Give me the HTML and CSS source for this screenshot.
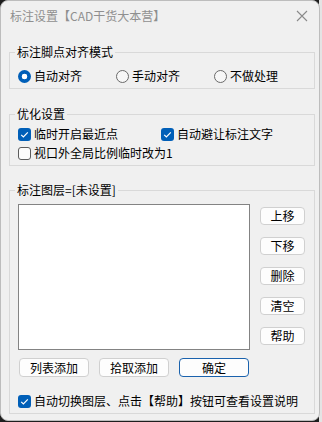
FILE: index.html
```html
<!DOCTYPE html>
<html lang="zh">
<head>
<meta charset="utf-8">
<title>标注设置</title>
<link rel="stylesheet" href="styles.css">
</head>
<body>
<div class="window">
  <div class="titlebar">
    <span class="title">标注设置【CAD干货大本营】</span>
    <svg class="close" width="12" height="12" viewBox="0 0 12 12"><path d="M1 1 L11 11 M11 1 L1 11" stroke="#8a8a8a" stroke-width="1.1" fill="none"/></svg>
  </div>
  <div class="content">
    <fieldset class="group g1">
      <legend>标注脚点对齐模式</legend>
      <div class="radios">
        <label class="opt"><span class="radio on"></span>自动对齐</label>
        <label class="opt"><span class="radio"></span>手动对齐</label>
        <label class="opt"><span class="radio"></span>不做处理</label>
      </div>
    </fieldset>
    <fieldset class="group g2">
      <legend>优化设置</legend>
      <div class="checks">
        <label class="opt"><span class="check on"><svg viewBox="0 0 13 13"><path d="M3.2 6.8 L5.4 9 L9.8 4.4" stroke="#fff" stroke-width="1.2" fill="none"/></svg></span>临时开启最近点</label>
        <label class="opt"><span class="check on"><svg viewBox="0 0 13 13"><path d="M3.2 6.8 L5.4 9 L9.8 4.4" stroke="#fff" stroke-width="1.2" fill="none"/></svg></span>自动避让标注文字</label>
        <label class="opt wide"><span class="check"></span>视口外全局比例临时改为1</label>
      </div>
    </fieldset>
    <fieldset class="group g3">
      <legend>标注图层=[未设置]</legend>
      <div class="layer-row">
        <div class="listbox"></div>
        <div class="side-buttons">
          <button class="btn">上移</button>
          <button class="btn">下移</button>
          <button class="btn">删除</button>
          <button class="btn">清空</button>
          <button class="btn">帮助</button>
        </div>
      </div>
      <div class="bottom-buttons">
        <button class="btn wide-btn">列表添加</button>
        <button class="btn wide-btn">拾取添加</button>
        <button class="btn wide-btn default">确定</button>
      </div>
      <label class="opt foot"><span class="check on"><svg viewBox="0 0 13 13"><path d="M3.2 6.8 L5.4 9 L9.8 4.4" stroke="#fff" stroke-width="1.2" fill="none"/></svg></span>自动切换图层、点击【帮助】按钮可查看设置说明</label>
    </fieldset>
  </div>
</div>
</body>
</html>
```
FILE: styles.css
```css
html, body {
  margin: 0;
  padding: 0;
}
body {
  width: 322px;
  height: 422px;
  overflow: hidden;
  background: linear-gradient(to right, #1e1e1e 0 319px, #e4e4e4 319px);
  font-family: "Noto Sans CJK SC", "Noto Sans", sans-serif;
  font-size: 12px;
  color: #000;
}
.window {
  box-sizing: border-box;
  width: 320px;
  height: 421px;
  background: #f0f0f0;
  border: 1px solid #bdbdbd;
  border-radius: 8px;
  display: flex;
  flex-direction: column;
}
.titlebar {
  height: 29px;
  flex: none;
  display: flex;
  align-items: center;
  justify-content: space-between;
  padding: 0 6px 0 9px;
}
.title {
  color: #8f8f8f;
  font-size: 12px;
  line-height: 16px;
  margin-top: 1px;
}
.close {
  width: 12px;
  height: 12px;
  margin-right: 5px;
}
.content {
  padding: 14px 4px 0 8px;
}
.group {
  margin: 0;
  min-width: 0;
  border: 1px solid #d9d9d9;
  padding: 8px 9px 4px 8px;
}
.group legend {
  padding: 0 2px;
  margin-left: -3px;
  line-height: 16px;
  height: 16px;
}
.g2 {
  margin-top: 17px;
  padding-top: 4px;
}
.g3 {
  margin-top: 16px;
  padding-top: 6px;
}
.opt {
  display: flex;
  align-items: center;
  line-height: 16px;
  height: 16px;
  white-space: nowrap;
}
.radios {
  display: grid;
  grid-template-columns: 98px 98px 1fr;
}
.radio {
  box-sizing: border-box;
  width: 13px;
  height: 13px;
  border-radius: 50%;
  border: 1px solid #6a6a6a;
  background: #f7f7f7;
  margin-right: 3px;
  flex: none;
}
.radio.on {
  border: none;
  background: radial-gradient(circle, #fff 0 2.6px, #005fb8 3.1px);
}
.checks {
  display: grid;
  grid-template-columns: 143px 1fr;
  row-gap: 3px;
}
.checks .wide {
  grid-column: 1 / span 2;
}
.check {
  box-sizing: border-box;
  width: 13px;
  height: 13px;
  border-radius: 3px;
  border: 1px solid #5c5c5c;
  background: #fbfbfb;
  margin-right: 3px;
  flex: none;
  display: flex;
}
.check.on {
  border: none;
  background: #005fb8;
}
.check svg {
  width: 13px;
  height: 13px;
}
.layer-row {
  display: flex;
  gap: 10px;
}
.listbox {
  box-sizing: border-box;
  width: 232px;
  height: 146px;
  background: #fff;
  border: 1px solid #838383;
}
.side-buttons {
  display: flex;
  flex-direction: column;
  gap: 12px;
  padding-top: 3px;
}
.btn {
  box-sizing: border-box;
  width: 45px;
  height: 18px;
  padding: 0;
  margin: 0;
  font-family: inherit;
  font-size: 12px;
  line-height: 16px;
  color: #000;
  background: #fdfdfd;
  border: 1px solid #d0d0d0;
  border-radius: 4px;
}
.bottom-buttons {
  display: flex;
  gap: 10px;
  margin: 8px 0 0 1px;
}
.wide-btn {
  width: 70px;
  height: 19px;
}
.btn.default {
  border: 1px solid #1a62ad;
}
.foot {
  margin-top: 16px;
}
```
